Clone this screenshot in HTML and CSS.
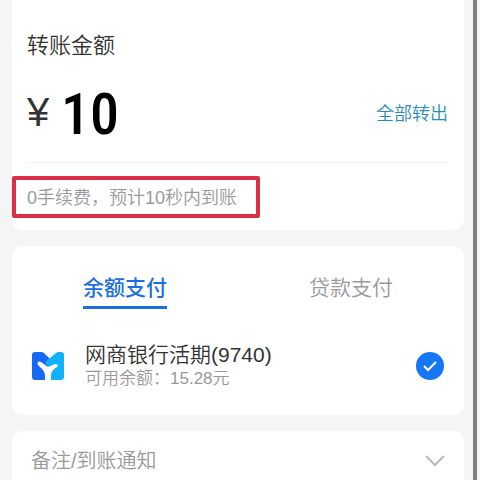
FILE: index.html
```html
<!DOCTYPE html>
<html lang="zh-CN">
<head>
<meta charset="utf-8">
<meta name="viewport" content="width=device-width, initial-scale=1">
<title>转账</title>
<link rel="stylesheet" href="styles.css">
</head>
<body>
<main class="screen">
  <section class="card amount-card">
    <label class="amount-label" for="amount">转账金额</label>
    <div class="amount-row">
      <span class="currency">¥</span>
      <input class="amount-input" id="amount" type="text" inputmode="decimal" value="10">
      <a class="all-link" href="#all">全部转出</a>
    </div>
    <p class="fee-note">0手续费，预计10秒内到账</p>
  </section>

  <section class="card pay-card">
    <div class="tabs" role="tablist">
      <button class="tab tab-active" type="button" role="tab" aria-selected="true">余额支付</button>
      <button class="tab" type="button" role="tab" aria-selected="false">贷款支付</button>
    </div>
    <label class="account" for="account-9740">
      <svg class="bank-logo" viewBox="0 0 32 28" aria-hidden="true">
        <path d="M3 0H9Q11 0 12 1L17 6V28H3Q0 28 0 25V3Q0 0 3 0Z" fill="#1668f5"/>
        <path d="M13 10L24 1Q25 0 27 0H29Q32 0 32 3V25Q32 28 29 28H16V15Z" fill="#12b1fd"/>
        <path d="M13 28V23Q13 20 10 17L6 13Q5 11 6 10Q7 9 9 10L16 15L23 12Q25 12 26 13Q26 15 25 15L22 17Q19 20 19 23V28Z" fill="#fff"/>
      </svg>
      <span class="account-text">
        <span class="account-name">网商银行活期(9740)</span>
        <span class="account-balance">可用余额：15.28元</span>
      </span>
      <input class="account-radio" id="account-9740" type="radio" name="account" checked>
      <svg class="check" viewBox="0 0 28 28" aria-hidden="true">
        <circle cx="14" cy="14" r="14" fill="#1677f6"/>
        <path d="M8 14L12 18L20 10" fill="none" stroke="#fff" stroke-width="2"/>
      </svg>
    </label>
  </section>

  <button class="card remark" type="button">
    <span>备注/到账通知</span>
    <svg class="chevron" viewBox="0 0 20 12" aria-hidden="true">
      <path d="M1 1L10 10L19 1" fill="none" stroke="#b8b8b8" stroke-width="2"/>
    </svg>
  </button>
</main>
</body>
</html>
```
FILE: styles.css
```css
* {
  box-sizing: border-box;
}

body {
  margin: 0;
  background: #f5f5f5;
  color: #333;
  font-family: "Liberation Sans", "Noto Sans CJK SC", sans-serif;
  font-weight: 350;
}

button,
input {
  font: inherit;
}

.screen {
  display: flex;
  flex-direction: column;
  gap: 16px;
  height: 100vh;
  overflow: hidden;
  margin-right: 3px;
  padding: 0 9px 0 12px;
  border-right: 4px solid #808080;
}

.card {
  flex-shrink: 0;
  background: #fff;
  border: 0;
  border-radius: 10px;
}

.amount-card {
  padding: 30px 16px 12px 15px;
  border-radius: 0 0 10px 10px;
}

.amount-label {
  display: block;
  font-size: 22px;
  line-height: 32px;
}

.amount-row {
  display: flex;
  align-items: center;
  height: 101px;
  border-bottom: 1px solid #f2f2f2;
}

.currency {
  width: 34px;
  font-size: 40px;
  line-height: 44px;
}

.amount-input {
  flex: 1;
  min-width: 0;
  height: 68px;
  padding: 4px 0 0;
  border: 0;
  outline: 0;
  background: none;
  color: #000;
  font-family: "Roboto Condensed", Roboto, sans-serif;
  font-size: 58px;
  font-weight: 500;
}

.all-link {
  color: #2c8bbd;
  font-size: 18px;
  text-decoration: none;
}

.fee-note {
  width: 248px;
  margin: 13px 0 0 -15px;
  padding: 2px 11px 0;
  border: 4px solid #dc2f45;
  border-radius: 2px;
  color: #999;
  font-size: 18px;
  line-height: 32px;
}

.pay-card {
  padding: 26px 0 24px;
}

.tabs {
  display: grid;
  grid-template-columns: 1fr 1fr;
  justify-items: center;
}

.tab {
  padding: 0 0 2px;
  border: 0;
  border-bottom: 3px solid transparent;
  background: none;
  color: #999;
  font-size: 21px;
  line-height: 32px;
}

.tab-active {
  border-color: #1c6fe0;
  color: #1c6fe0;
  font-weight: 500;
}

.account {
  display: flex;
  align-items: center;
  margin: 32px 20px 0;
}

.bank-logo {
  width: 32px;
  height: 28px;
}

.account-text {
  display: flex;
  flex: 1;
  flex-direction: column;
  margin-left: 21px;
  padding-top: 2px;
}

.account-name {
  font-size: 21px;
  line-height: 24px;
}

.account-balance {
  color: #999;
  font-size: 17px;
  line-height: 24px;
}

.account-radio {
  position: absolute;
  opacity: 0;
}

.check {
  width: 28px;
  height: 28px;
}

.remark {
  display: flex;
  align-items: center;
  justify-content: space-between;
  width: 100%;
  padding: 13px 19px 24px;
  color: #999;
  font-size: 20px;
  line-height: 34px;
}

.chevron {
  width: 20px;
  height: 12px;
}
```
